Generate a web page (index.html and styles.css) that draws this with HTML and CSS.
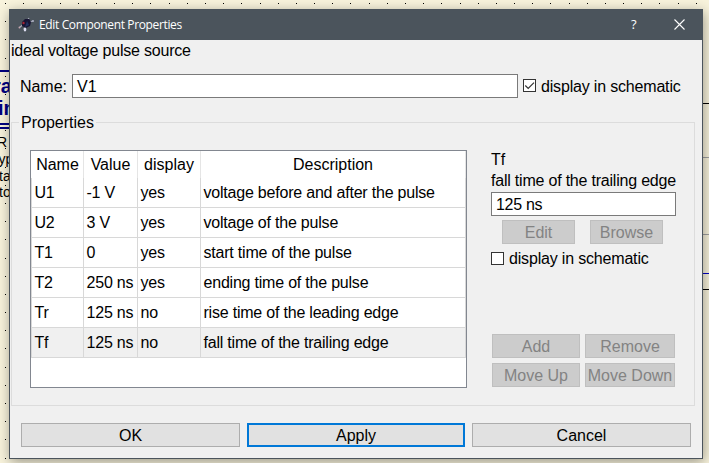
FILE: index.html
```html
<!DOCTYPE html>
<html lang="en">
<head>
<meta charset="utf-8">
<title>Edit Component Properties</title>
<link rel="stylesheet" href="styles.css">
</head>
<body>
<svg class="schematic" width="709" height="463" shape-rendering="crispEdges">
  <g id="grid"></g>
  <path d="M0 70h9v2H0zM0 123h9v2H0zM0 127h9v2H0z" fill="#000080"/>
  <text class="heading" x="-7" y="93">ra</text>
  <text class="heading" x="-2" y="115">in</text>
  <text x="-3" y="147">R</text>
  <text x="-1.5" y="164">yp</text>
  <text x="-1" y="181">ta</text>
  <text x="-1" y="197">to</text>
  <path d="M703 103h6v1h-6zM703 289h6v1h-6z" fill="#000"/>
  <path d="M703 157h6v1h-6zM703 234h6v1h-6z" fill="#a0a0a0"/>
  <path d="M703 273h6v1h-6z" fill="#0000c8"/>
</svg>

<section class="dialog">
  <header class="titlebar">
    <svg class="app-icon" width="18" height="16" viewBox="0 0 18 16">
      <path d="M2 10l4-3M9 4l2-3M11 5l4-1M6 11l1 3" stroke="#a9abbc" stroke-width="1.200" fill="none"/>
      <path d="M4 5l3-3 4 0 2 3-1 4-4 2-4-2z" fill="#171433"/>
      <path d="M9 4l2 4-4 2z" fill="#203161"/>
      <circle cx="5.500" cy="6" r="1.200" fill="#a52434"/>
      <circle cx="1.500" cy="10.500" r="1" fill="#c6a8b1"/>
      <ellipse cx="7" cy="12.500" rx="1.300" ry="2" fill="#dcdcf0"/>
      <circle cx="15" cy="4" r="1" fill="#aeb1c3"/>
    </svg>
    <h1>Edit Component Properties</h1>
    <span class="help">?</span>
    <svg class="close" width="11" height="11" viewBox="0 0 11 11"><path d="M.5.5l10 10M10.500.5l-10 10" stroke="#fff" stroke-width="1.1"/></svg>
  </header>
  <p class="summary">ideal voltage pulse source</p>
  <div class="name-row">
    <span class="name-label">Name:</span>
    <div class="field name-field">V1</div>
    <span class="box"><svg width="11" height="11" viewBox="0 0 11 11"><path d="M1.300 5.500l2.900 2.900L10 2.600" fill="none" stroke="#333" stroke-width="1.2"/></svg></span>
    <span class="check-label">display in schematic</span>
  </div>

  <fieldset class="group">
    <legend>Properties</legend>
    <div class="group-body">
      <div class="table">
        <div class="row head"><span>Name</span><span>Value</span><span>display</span><span>Description</span></div>
        <div class="row"><span>U1</span><span>-1 V</span><span>yes</span><span>voltage before and after the pulse</span></div>
        <div class="row"><span>U2</span><span>3 V</span><span>yes</span><span>voltage of the pulse</span></div>
        <div class="row"><span>T1</span><span>0</span><span>yes</span><span>start time of the pulse</span></div>
        <div class="row"><span>T2</span><span>250 ns</span><span>yes</span><span>ending time of the pulse</span></div>
        <div class="row"><span>Tr</span><span>125 ns</span><span>no</span><span>rise time of the leading edge</span></div>
        <div class="row selected"><span>Tf</span><span>125 ns</span><span>no</span><span>fall time of the trailing edge</span></div>
      </div>
      <div class="editor">
        <p class="prop-name">Tf</p>
        <p class="prop-desc">fall time of the trailing edge</p>
        <div class="field">125 ns</div>
        <div class="edit-buttons"><div class="button disabled">Edit</div><div class="button disabled">Browse</div></div>
        <div class="check-row"><span class="box"></span><span class="check-label">display in schematic</span></div>
        <div class="list-buttons">
          <div class="button disabled">Add</div><div class="button disabled">Remove</div>
          <div class="button disabled">Move Up</div><div class="button disabled">Move Down</div>
        </div>
      </div>
    </div>
  </fieldset>

  <footer class="actions">
    <div class="button">OK</div>
    <div class="button default">Apply</div>
    <div class="button">Cancel</div>
  </footer>
</section>
<script src="grid.js"></script>
</body>
</html>
```
FILE: styles.css
```css
* { box-sizing: border-box; }
body {
  margin: 0;
  padding: 9px 0 0 9px;
  width: 709px;
  height: 463px;
  overflow: hidden;
  background: #f8f3dc;
  font: 16px/18px "Liberation Sans", Arial, sans-serif;
  color: #000;
}
p, h1 { margin: 0; font-weight: normal; white-space: nowrap; }
.schematic { position: absolute; left: 0; top: 0; font-size: 14px; }
.schematic .heading { font-size: 20px; font-weight: bold; fill: #000080; }
.dialog {
  position: relative;
  width: 694px;
  height: 450px;
  border: 1px solid #4b545c;
  background: #f0f0f0;
  box-shadow: 1px 3px 12px rgba(0, 0, 0, .38);
}
.titlebar {
  display: flex;
  align-items: center;
  height: 30px;
  padding: 0 17px 0 8px;
  background: #4b545c;
  color: #fff;
}
.app-icon { margin-right: 3px; }
.titlebar h1 { flex: 1; font: 12px/16px "Open Sans", "Noto Sans", sans-serif; letter-spacing: -.36px; }
.help { width: 8px; margin: -2px 35px 0 0; font: 13px/16px "Open Sans", sans-serif; }
.close { margin-top: -2px; }
.summary { height: 34px; padding: 2px 0 0 1px; letter-spacing: -.2px; }
.name-row { display: flex; align-items: center; height: 24px; }
.name-label { width: 62px; padding: 1px 0 0 10px; letter-spacing: -.05px; }
.field {
  height: 24px;
  padding: 3px 4px;
  border: 1px solid #7a7a7a;
  background: #fff;
  line-height: 18px;
  letter-spacing: -.3px;
}
.name-field { width: 446px; margin-right: 5px; padding-top: 3px; letter-spacing: 0; }
.box {
  display: block;
  flex: none;
  width: 13px;
  height: 13px;
  border: 1px solid #333;
  background: #fff;
}
.name-row .box { margin-top: -2px; }
.box svg { display: block; }
.check-label { margin-left: 5px; padding-top: 1px; white-space: nowrap; letter-spacing: -.18px; }
.check-row .check-label { padding-top: 2px; }
.group {
  width: 684px;
  height: 293px;
  margin: 15px 0 0 1px;
  padding: 0;
  border: 1px solid #dcdcdc;
}
.group legend { height: 18px; line-height: 20px; margin-left: 7px; padding: 0 2px; }
.group-body { display: flex; padding: 19px 18px 0; }
.table {
  flex: none;
  width: 437px;
  height: 238px;
  border: 1px solid #828790;
  background: #fff;
}
.row {
  display: grid;
  grid-template-columns: 52px 54px 63px 265px;
  width: 435px;
  height: 30px;
  line-height: 29px;
  border-left: 1px solid #d8d8d8;
  letter-spacing: -.21px;
}
.row span { padding-left: 2.500px; border-right: 1px solid #d8d8d8; border-bottom: 1px solid #d8d8d8; white-space: nowrap; }
.row.head { height: 27px; line-height: 27px; border-left-color: #fff; letter-spacing: 0; }
.row.head span { padding: 0; border-bottom: 0; border-right-color: #e5e5e5; text-align: center; }
.row.selected span { background: #f0f0f0; }
.editor { width: 185px; margin-left: 24px; }
.prop-name { height: 21px; padding-top: 1px; }
.prop-desc { height: 21px; padding-top: 1px; letter-spacing: -.21px; }
.edit-buttons { display: flex; gap: 15px; padding: 4px 11px 0; }
.edit-buttons .button { width: 73px; }
.check-row { display: flex; align-items: center; height: 18px; margin-top: 5px; }
.list-buttons {
  display: grid;
  grid-template-columns: 88px 90px;
  gap: 5px;
  margin: 67px 0 0 1px;
}
.button {
  height: 24px;
  border: 1px solid #adadad;
  background: #e1e1e1;
  line-height: 24px;
  text-align: center;
  white-space: nowrap;
}
.button.disabled { border-color: #bfbfbf; background: #ccc; color: #838383; }
.actions { display: grid; grid-template-columns: 219px 218px 219px; gap: 7px; padding: 17px 0 0 11px; }
.button.default { border: 2px solid #0078d7; line-height: 22px; }
```
FILE: grid.js
```js
const grid = document.getElementById("grid");
const STEP = 18.18;
for (let col = 0; col < 39; col++) {
  for (let row = 0; row < 26; row++) {
    const dot = document.createElementNS("http://www.w3.org/2000/svg", "rect");
    dot.setAttribute("x", Math.round(5 + col * STEP));
    dot.setAttribute("y", Math.round(3 + row * STEP));
    dot.setAttribute("width", 1);
    dot.setAttribute("height", 1);
    grid.appendChild(dot);
  }
}
```
